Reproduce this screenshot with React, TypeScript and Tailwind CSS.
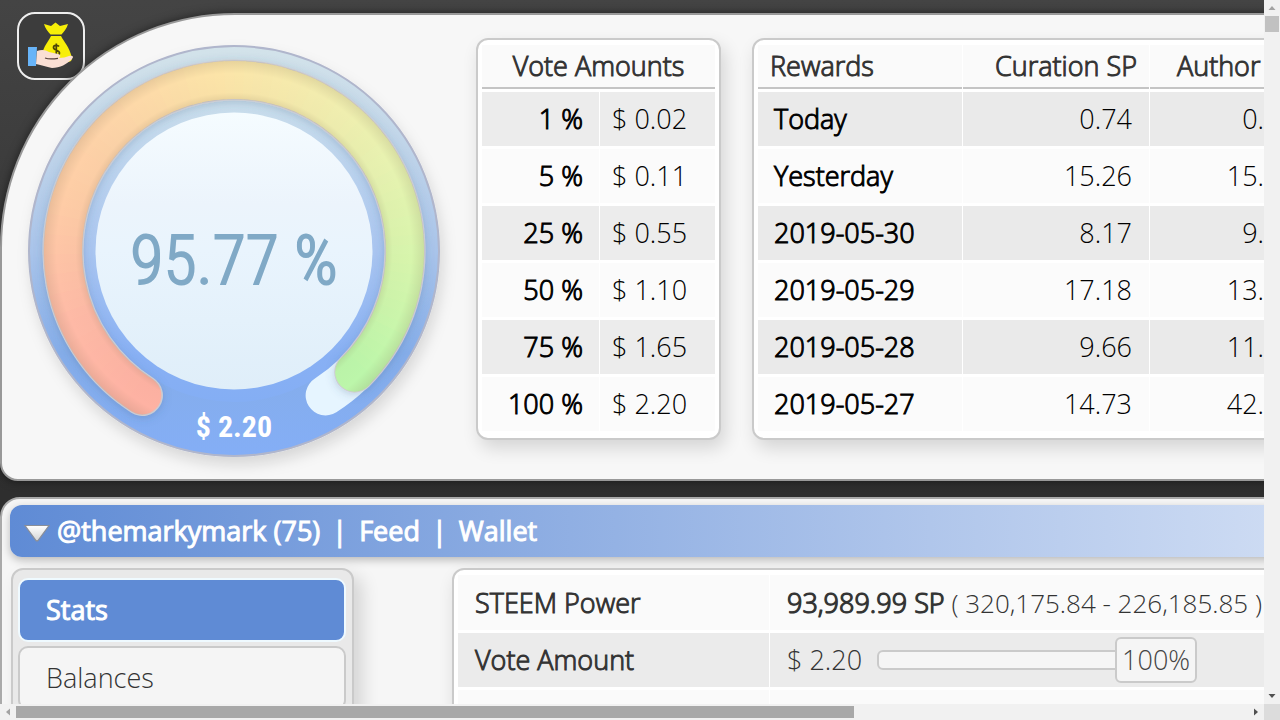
import React from "react";

const CX = 208;
const CY = 208;
const R = 171;
const START = 212.4;
const SWEEP = 295.2;
const VOTING_POWER = 95.77;

type Stop = [number, number, number, number];
const STOPS: Stop[] = [
  [0, 254, 178, 163],
  [0.12, 254, 186, 166],
  [0.25, 254, 203, 166],
  [0.38, 253, 214, 168],
  [0.5, 252, 228, 168],
  [0.62, 243, 236, 174],
  [0.74, 231, 242, 176],
  [0.86, 214, 245, 172],
  [1, 188, 246, 170],
];

function colorAt(t: number) {
  let i = 0;
  while (i < STOPS.length - 2 && t > STOPS[i + 1][0]) i++;
  const a = STOPS[i];
  const b = STOPS[i + 1];
  const k = (t - a[0]) / (b[0] - a[0]);
  const mix = (n: number) => Math.round(a[n] + (b[n] - a[n]) * k);
  return `rgb(${mix(1)},${mix(2)},${mix(3)})`;
}

function point(deg: number) {
  const rad = (deg * Math.PI) / 180;
  return [CX + R * Math.sin(rad), CY - R * Math.cos(rad)];
}

function arc(from: number, to: number) {
  const [x1, y1] = point(from);
  const [x2, y2] = point(to);
  return `M${x1} ${y1}A${R} ${R} 0 ${to - from > 180 ? 1 : 0} 1 ${x2} ${y2}`;
}

function Gauge() {
  const end = START + (SWEEP * VOTING_POWER) / 100;
  const count = 90;
  const step = (end - START) / count;
  const [sx, sy] = point(START);
  const [ex, ey] = point(end);
  return (
    <div className="relative size-[416px] shrink-0">
      <svg viewBox="0 0 416 416" className="size-full overflow-visible" aria-hidden="true">
        <defs>
          <linearGradient id="rim" x1="0" y1="0" x2="0" y2="1">
            <stop offset="0" stopColor="#d3e3ea" />
            <stop offset="0.25" stopColor="#bfd4e9" />
            <stop offset="0.5" stopColor="#a9c4ea" />
            <stop offset="0.75" stopColor="#85ade9" />
            <stop offset="1" stopColor="#84aef6" />
          </linearGradient>
          <linearGradient id="innerRim" x1="0" y1="0" x2="0" y2="1">
            <stop offset="0" stopColor="#cbdfec" />
            <stop offset="0.5" stopColor="#a9c5f0" />
            <stop offset="0.85" stopColor="#88b0f4" />
            <stop offset="1" stopColor="#84aef4" />
          </linearGradient>
          <linearGradient id="face" x1="0" y1="0" x2="0" y2="1">
            <stop offset="0" stopColor="#f5fcff" />
            <stop offset="0.33" stopColor="#ecf4fc" />
            <stop offset="0.5" stopColor="#e9f4fd" />
            <stop offset="1" stopColor="#dfeef9" />
          </linearGradient>
          <radialGradient id="shade" gradientUnits="userSpaceOnUse" cx={CX} cy={CY} r="191">
            <stop offset="0.79" stopColor="#7a6a50" stopOpacity="0.16" />
            <stop offset="0.83" stopColor="#7a6a50" stopOpacity="0.02" />
            <stop offset="0.93" stopColor="#7a6a50" stopOpacity="0" />
            <stop offset="1" stopColor="#7a6a50" stopOpacity="0.16" />
          </radialGradient>
          <filter id="drop" x="-20%" y="-20%" width="140%" height="140%">
            <feDropShadow dx="3" dy="8" stdDeviation="7" floodOpacity="0.13" />
          </filter>
          <filter id="soft" x="-20%" y="-20%" width="140%" height="140%">
            <feDropShadow dx="0" dy="2" stdDeviation="4" floodColor="#3a5a80" floodOpacity="0.25" />
          </filter>
        </defs>
        <circle cx={CX} cy={CY} r="205" fill="url(#rim)" stroke="#b0b6cc" strokeWidth="2" filter="url(#drop)" />
        <circle cx={CX} cy={CY} r="151" fill="url(#innerRim)" />
        <path d={arc(START, START + SWEEP)} fill="none" stroke="#e6f5ff" strokeWidth="40" strokeLinecap="round" />
        <path d={arc(START, end)} fill="none" stroke="#cdccd2" strokeWidth="41" strokeLinecap="round" filter="url(#soft)" />
        <circle cx={sx} cy={sy} r="19" fill={colorAt(0)} />
        <circle cx={ex} cy={ey} r="19.5" fill={colorAt(1)} />
        {Array.from({ length: count }, (_, i) => (
          <path
            key={i}
            d={arc(START + i * step, Math.min(end, START + (i + 1) * step + 0.4))}
            fill="none"
            stroke={colorAt(i / (count - 1))}
            strokeWidth="38"
          />
        ))}
        <path d={arc(START, end)} fill="none" stroke="url(#shade)" strokeWidth="39" strokeLinecap="round" />
        <circle cx={CX} cy={CY} r="138.5" fill="url(#face)" />
      </svg>
      <div className="absolute inset-x-0 top-[170px] text-center font-['Roboto_Condensed','Roboto',sans-serif] text-[68px]/[96px] font-light text-[#80a9c6] [-webkit-text-stroke:2px]">
        95.77 %
      </div>
      <div className="absolute inset-x-0 top-[364px] text-center font-['Roboto_Condensed','Roboto',sans-serif] text-[30px]/[40px] font-bold text-white">
        $ 2.20
      </div>
    </div>
  );
}

function MoneyBag() {
  return (
    <svg viewBox="0 0 48 48" className="size-12" aria-hidden="true">
      <path d="M17 2l7 2 4.500-3.500L33 4l8-2c-1 4-4 7.500-6.500 10.500h-11C21 9.500 18 6 17 2z" fill="#f7ee08" />
      <path d="M24 14h10c3 6 8 10 11 22 0 4-3 4-6 4H21c-5 0-7-3-6-8 2-8 6-12 9-18z" fill="#f7ee08" />
      <path
        d="M32 24.500c-1-1.500-5.500-1.800-5.500 1 0 3.200 6 2.200 6 5.400 0 3-5.500 2.700-6.600.7M29.300 21.500v14"
        fill="none"
        stroke="#4a4408"
        strokeWidth="1.700"
      />
      <path d="M1 25h9l-1 19H1z" fill="#68b4f8" />
      <path
        d="M10 29c5-2 9-1 12 1l9 2c3 .5 3 3.500 0 4 5 0 8-1 11-2 4-1 5 1 3 3-5 5-12 9-20 9-6-1-10-3-16-4z"
        fill="#fadfd4"
      />
      <path d="M18 36c4 1.500 9 1 13 .3" fill="none" stroke="#55403c" strokeWidth="1.200" />
    </svg>
  );
}

const VOTES = [
  ["1 %", "$ 0.02"],
  ["5 %", "$ 0.11"],
  ["25 %", "$ 0.55"],
  ["50 %", "$ 1.10"],
  ["75 %", "$ 1.65"],
  ["100 %", "$ 2.20"],
];

const REWARDS = [
  ["Today", "0.74", "0."],
  ["Yesterday", "15.26", "15."],
  ["2019-05-30", "8.17", "9."],
  ["2019-05-29", "17.18", "13."],
  ["2019-05-28", "9.66", "11."],
  ["2019-05-27", "14.73", "42."],
];

const CARD = "rounded-xl border-2 border-[#cacaca] bg-white shadow-[4px_8px_18px_rgba(0,0,0,0.14)]";
const STRONG = "font-light [-webkit-text-stroke:1px]";
const HEAVY = "font-normal [-webkit-text-stroke:1px]";

function VoteTable() {
  return (
    <div className={`${CARD} w-[245px] shrink-0 px-[3px] pt-[2px] pb-1`}>
      <table className="w-full border-separate border-spacing-x-px border-spacing-y-[3px]">
        <thead>
          <tr className="h-11 bg-[#fafafa] text-[#333]">
            <th colSpan={2} className={`${STRONG} border-b-2 border-[#c4c4c4] p-0 text-center`}>
              Vote Amounts
            </th>
          </tr>
        </thead>
        <tbody>
          {VOTES.map(([pct, amount]) => (
            <tr key={pct} className="h-[54px] bg-[#fbfbfb] text-black odd:bg-[#ececec]">
              <th className={`${STRONG} w-[117px] p-0 pr-4 text-right`}>{pct}</th>
              <td className="p-0 pl-3 font-light">{amount}</td>
            </tr>
          ))}
        </tbody>
      </table>
    </div>
  );
}

function RewardsTable() {
  return (
    <div className={`${CARD} shrink-0 grow px-[3px] pt-[2px] pb-1`}>
      <table className="border-separate border-spacing-x-px border-spacing-y-[3px]">
        <thead>
          <tr className="h-11 bg-[#fafafa] text-[#333]">
            <th className={`${STRONG} w-[204px] border-b-2 border-[#c4c4c4] p-0 pl-3 text-left`}>Rewards</th>
            <th className={`${STRONG} w-[186px] border-b-2 border-[#c4c4c4] p-0 pr-3 text-right`}>Curation SP</th>
            <th className={`${STRONG} w-[166px] border-b-2 border-[#c4c4c4] p-0 pl-[27px] text-left`}>Author</th>
          </tr>
        </thead>
        <tbody>
          {REWARDS.map(([day, curation, author]) => (
            <tr key={day} className="h-[54px] bg-[#fbfbfb] text-black odd:bg-[#eaeaea]">
              <th className={`${STRONG} p-0 pl-4 text-left`}>{day}</th>
              <td className="p-0 pr-[17px] text-right font-light">{curation}</td>
              <td className="p-0 pr-[52px] text-right font-light">{author}</td>
            </tr>
          ))}
        </tbody>
      </table>
    </div>
  );
}

function AccountPanel() {
  return (
    <section className="rounded-[20px] border-2 border-[#aaa] bg-[#f6f6f6] px-2 pt-1.5 pb-10">
      <header
        className={`${HEAVY} flex h-[52px] items-center rounded-xl bg-linear-to-r from-[#5f8bd5] via-[#b0c6eb] via-50% to-white text-white shadow-[0_3px_8px_rgba(0,0,0,0.25)]`}
      >
        <button aria-label="Toggle account" className="mr-[7px] ml-3.5 pt-1">
          <svg viewBox="0 0 26 18" className="h-[18px] w-[26px]">
            <defs>
              <linearGradient id="tri" x1="0" y1="0" x2="0" y2="1">
                <stop offset="0" stopColor="#fff" />
                <stop offset="1" stopColor="#d4d4d4" />
              </linearGradient>
            </defs>
            <path d="M1 1.500h24L14 16.500q-1 1-2 0z" fill="url(#tri)" stroke="#8b8f98" strokeWidth="1.200" />
          </svg>
        </button>
        <a href="#account">@themarkymark (75)</a>
        <span className="mx-3">|</span>
        <a href="#feed">Feed</a>
        <span className="mx-3">|</span>
        <a href="#wallet">Wallet</a>
      </header>
      <div className="mt-[11px] flex items-start">
        <nav className="ml-px flex w-[343px] shrink-0 flex-col gap-1 rounded-xl border-2 border-[#cacaca] bg-[#e9e9e9] pr-1.5 pl-[5px] py-2 shadow-[8px_8px_18px_rgba(0,0,0,0.14)]">
          <button
            className={`${HEAVY} h-[64px] rounded-[10px] border-2 border-[#effaff] bg-[#5f8bd5] pl-[26px] text-left text-white`}
          >
            Stats
          </button>
          <button className="h-[64px] rounded-[10px] border-2 border-[#cacaca] bg-[#f5f5f5] pl-[26px] text-left font-light text-[#333]">
            Balances
          </button>
        </nav>
        <div className={`${CARD} ml-[98px] grow px-[3px] pt-0.5 pb-px`}>
          <table className="w-full border-separate border-spacing-x-px border-spacing-y-[3px] text-[#333]">
            <tbody>
              <tr className="h-[55px] bg-[#fafafa]">
                <th className={`${STRONG} w-[311px] p-0 pl-[17px] text-left`}>STEEM Power</th>
                <td className="p-0 pl-[17px] font-light whitespace-nowrap">
                  <b className={`${STRONG} text-shadow-[0_0_1px_#333]`}>93,989.99 SP</b>
                  <span className="text-[26px]"> ( 320,175.84 - 226,185.85 )</span>
                </td>
              </tr>
              <tr className="h-[54px] bg-[#ebebeb]">
                <th className={`${STRONG} p-0 pl-[17px] text-left`}>
                  <label htmlFor="vote-weight">Vote Amount</label>
                </th>
                <td className="p-0 pl-[17px] font-light">
                  <div className="flex items-center gap-[15px]">
                    <span>$ 2.20</span>
                    <div className="relative flex h-[46px] w-80 items-center">
                      <input
                        id="vote-weight"
                        type="range"
                        min={0}
                        max={100}
                        defaultValue={100}
                        className="h-5 w-full appearance-none rounded-md border-2 border-[#cacaca] bg-[#f5f5f5] [&::-webkit-slider-thumb]:appearance-none"
                      />
                      <output
                        htmlFor="vote-weight"
                        className="absolute right-0 flex h-[46px] w-[82px] items-center justify-center rounded-md border-2 border-[#cacaca] bg-[#f5f5f5] text-[#444]"
                      >
                        100%
                      </output>
                    </div>
                  </div>
                </td>
              </tr>
              <tr className="h-[54px] bg-[#fafafa]">
                <th className="p-0" />
                <td className="p-0" />
              </tr>
            </tbody>
          </table>
        </div>
      </div>
    </section>
  );
}

function Arrow({ d, color }: { d: string; color: string }) {
  return (
    <svg viewBox="0 0 16 16" className="size-4 shrink-0" aria-hidden="true">
      <path d={d} fill={color} />
    </svg>
  );
}

export default function App() {
  return (
    <div className="grid h-screen grid-cols-[minmax(0,1fr)_16px] grid-rows-[minmax(0,1fr)_16px] bg-[#f1f1f1] font-['Open_Sans','Noto_Sans',sans-serif] text-[27px]/[36px]">
      <main className="overflow-hidden bg-linear-to-b from-[#444] to-[#2e2e2e] to-70%">
        <div className="relative min-w-[1860px] pt-[13px]">
          <a
            href="#top"
            aria-label="Home"
            className="absolute top-3 left-[17px] flex size-[68px] items-center justify-center rounded-[18px] border-2 border-[#eee] bg-[#3c3c3c]"
          >
            <MoneyBag />
          </a>
          <section className="relative mb-4 flex items-start rounded-l-[18px] rounded-tl-[235px] border-2 border-[#999] bg-[#f7f7f7] px-6 pt-[23px] pb-5 shadow-[0_0_10px_rgba(0,0,0,0.5)]">
            <div className="mt-[5px] mr-[34px]">
              <Gauge />
            </div>
            <div className="flex grow gap-[31px]">
              <VoteTable />
              <RewardsTable />
            </div>
          </section>
          <AccountPanel />
        </div>
      </main>
      <div className="flex flex-col justify-between">
        <div>
          <Arrow d="M4.500 10l3.500-4 3.500 4z" color="#a3a3a3" />
          <div className="mx-px h-4 bg-[#c1c1c1]" />
        </div>
        <Arrow d="M4.500 6l3.500 4 3.500-4z" color="#505050" />
      </div>
      <div className="flex">
        <Arrow d="M10 4.500L6 8l4 3.500z" color="#a3a3a3" />
        <div className="flex min-w-0 grow items-center">
          <div className="h-3 w-[68%] bg-[#a8a8a8]" />
        </div>
        <Arrow d="M6 4.500L10 8l-4 3.500z" color="#505050" />
      </div>
      <div className="bg-[#dcdcdc]" />
    </div>
  );
}
